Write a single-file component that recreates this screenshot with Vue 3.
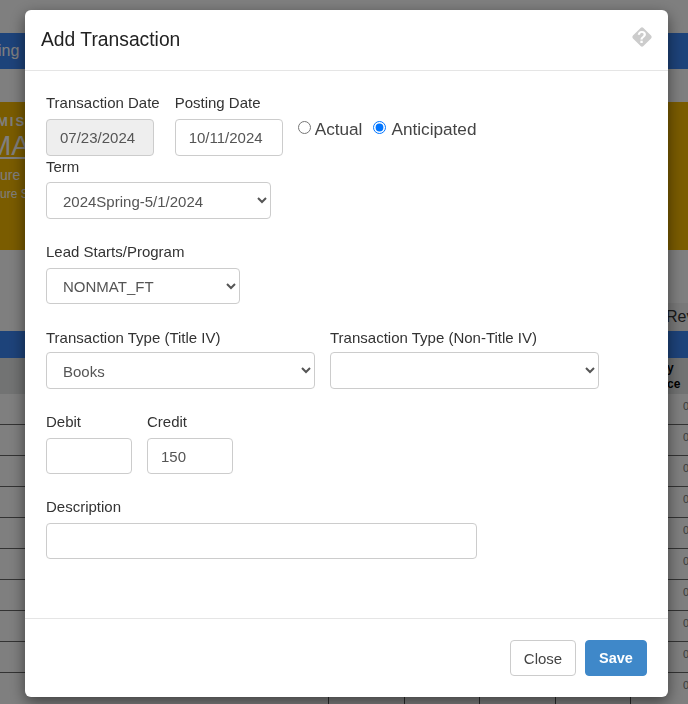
<script setup>
const rows = Array.from({ length: 10 })
const cells = Array.from({ length: 5 })
</script>

<template>
  <div class="page">
    <div class="nav">ing</div>
    <div class="banner">
      <div class="b1">MIS</div>
      <div class="b2">MA</div>
      <div class="b3">ure</div>
      <div class="b4">ure S</div>
    </div>
    <div class="tabs"><span>Rev</span></div>
    <div class="bluehead"></div>
    <div class="thead"><span>y<br />ce</span></div>
    <div v-for="(r, i) in rows" :key="i" class="row">
      <div v-for="(c, j) in cells" :key="j" class="cell"></div>
      <div class="amount">0.00</div>
    </div>
  </div>

  <div class="backdrop">
    <div class="modal">
      <header class="head">
        <h4>Add Transaction</h4>
        <svg class="help" viewBox="0 0 22 22" width="22" height="22" aria-hidden="true">
          <rect x="3.6" y="3.6" width="14.8" height="14.8" rx="2" transform="rotate(45 11 11)" fill="#ccc" />
          <text x="11" y="16.5" text-anchor="middle" class="qm">?</text>
        </svg>
      </header>

      <main class="body">
        <div class="line first">
          <div class="field">
            <label>Transaction Date</label>
            <input class="ctl date" value="07/23/2024" disabled />
          </div>
          <div class="field">
            <label>Posting Date</label>
            <input class="ctl date" value="10/11/2024" />
          </div>
          <div class="radios">
            <label class="radio"><input type="radio" name="k" />Actual</label>
            <label class="radio anticipated"><input type="radio" name="k" checked />Anticipated</label>
          </div>
        </div>

        <div class="field term">
          <label>Term</label>
          <select class="ctl sel-term"><option>2024Spring-5/1/2024</option></select>
        </div>

        <div class="field lead">
          <label>Lead Starts/Program</label>
          <select class="ctl sel-lead"><option>NONMAT_FT</option></select>
        </div>

        <div class="line types">
          <div class="field">
            <label>Transaction Type (Title IV)</label>
            <select class="ctl sel-type"><option>Books</option></select>
          </div>
          <div class="field">
            <label>Transaction Type (Non-Title IV)</label>
            <select class="ctl sel-type"><option></option></select>
          </div>
        </div>

        <div class="line amounts">
          <div class="field">
            <label>Debit</label>
            <input class="ctl money" value="" />
          </div>
          <div class="field">
            <label>Credit</label>
            <input class="ctl money" value="150" />
          </div>
        </div>

        <div class="field descr">
          <label>Description</label>
          <input class="ctl desc" value="" />
        </div>
      </main>

      <footer class="foot">
        <button class="btn close">Close</button>
        <button class="btn save">Save</button>
      </footer>
    </div>
  </div>
</template>

<style>
html, body { margin: 0; height: 100%; overflow: hidden; background: #fff; }
</style>

<style scoped>
.page {
  width: 688px;
  height: 704px;
  overflow: hidden;
  font-family: "Liberation Sans", Arial, sans-serif;
  padding-top: 33px;
  box-sizing: border-box;
}
.nav {
  height: 36px;
  line-height: 36px;
  background: #3b86f5;
  color: #fff;
  font-size: 16px;
  text-indent: -2px;
}
.banner {
  margin-top: 33px;
  height: 148px;
  background: #f5b800;
  color: #fff;
  overflow: hidden;
  padding-top: 12px;
  box-sizing: border-box;
}
.b1 { font-weight: 700; font-size: 13px; letter-spacing: 2px; line-height: 16px; text-indent: -3px; }
.b2 { font-size: 28px; line-height: 32px; text-indent: -12px; text-decoration: underline; }
.b3 { font-size: 14px; line-height: 20px; margin-top: 3px; }
.b4 { font-size: 12px; line-height: 18px; }
.tabs {
  height: 81px;
  display: flex;
  justify-content: flex-end;
  align-items: flex-end;
  color: #333;
  font-size: 16px;
}
.tabs span {
  width: 22px;
  height: 28px;
  line-height: 28px;
  overflow: hidden;
  background: #f2f2f2;
}
.bluehead { height: 27px; background: #3b86f5; }
.thead {
  height: 36px;
  background: #e4e6e6;
  display: flex;
  justify-content: flex-end;
  font-size: 12px;
  font-weight: 700;
  line-height: 16px;
  padding-top: 2px;
  box-sizing: border-box;
  color: #000;
}
.thead span { width: 21px; }
.row {
  height: 31px;
  box-sizing: border-box;
  border-bottom: 1.5px solid #666;
  display: grid;
  grid-template-columns: 329px repeat(4, 75.5px) 58px;
  color: #777;
  font-size: 11px;
  line-height: 25px;
}
.row:last-child { border-bottom: 0; }
.cell { border-right: 1px solid #555; min-width: 0; }
.amount { padding-left: 52px; white-space: nowrap; overflow: hidden; }

.backdrop {
  position: fixed;
  inset: 0;
  background: rgba(0, 0, 0, 0.5);
  padding: 10px 20px 7px 25px;
  box-sizing: border-box;
  display: flex;
}
.modal {
  flex: 1;
  background: #fff;
  border-radius: 6px;
  box-shadow: 0 5px 15px rgba(0, 0, 0, 0.5);
  display: flex;
  flex-direction: column;
  font-family: "Liberation Sans", Arial, sans-serif;
  color: #333;
}
.head {
  height: 61px;
  box-sizing: border-box;
  border-bottom: 1px solid #e5e5e5;
  display: flex;
  align-items: center;
  justify-content: space-between;
  padding: 0 15px 0 16px;
}
.head h4 {
  margin: 0;
  font-size: 19.3px;
  font-weight: 400;
  color: #222;
  line-height: 58px;
}
.help { margin-top: -7px; }
.qm {
  font-family: "Liberation Sans", Arial, sans-serif;
  font-size: 16px;
  font-weight: 700;
  fill: #fff;
}
.body {
  flex: 1;
  padding: 22px 21px 0;
}
.line { display: flex; gap: 15px; }
.field { display: flex; flex-direction: column; }
.field label {
  font-size: 15px;
  line-height: 20px;
  margin-bottom: 6px;
  color: #333;
}
.term { margin-top: 1px; }
.term label { margin-bottom: 5px; }
.lead { margin-top: 23px; }
.types { margin-top: 24px; }
.types .field label { margin-bottom: 4px; }
.amounts { margin-top: 23px; }
.descr { margin-top: 23px; }
.ctl {
  box-sizing: border-box;
  height: 37px;
  border: 1px solid #ccc;
  border-radius: 4px;
  background: #fff;
  font-family: inherit;
  font-size: 15px;
  color: #555;
  padding: 0 13px;
  outline: none;
}
select.ctl { padding: 2px 12px 0; }
.ctl:disabled { background: #eee; color: #555; opacity: 1; }
.date { width: 108px; }
.sel-term { width: 225px; }
select.sel-lead { width: 194px; height: 36px; padding-top: 0; }
.sel-type { width: 269px; }
.money { width: 86px; height: 36px; }
.desc { width: 431px; height: 36px; }
.radios {
  display: flex;
  gap: 11px;
  padding-top: 24px;
  font-size: 17.2px;
  color: #444;
}
.radio { display: flex; align-items: flex-start; line-height: 24px; height: 24px; }
.radio input { margin: 4px 4px 0 0; width: 13px; height: 13px; }
.anticipated input { margin-right: 5px; }
.foot {
  height: 79px;
  box-sizing: border-box;
  border-top: 1px solid #e5e5e5;
  display: flex;
  justify-content: flex-end;
  align-items: flex-start;
  gap: 9px;
  padding: 21px 21px 0 0;
}
.btn {
  height: 36px;
  box-sizing: border-box;
  border-radius: 4px;
  font-family: inherit;
  font-size: 15px;
  border: 1px solid #ccc;
  background: #fff;
  color: #444;
}
.close { width: 66px; }
.save {
  width: 62px;
  background: #3f88c9;
  border-color: #3f88c9;
  color: #fff;
  font-weight: 700;
  font-size: 14.5px;
}
</style>
